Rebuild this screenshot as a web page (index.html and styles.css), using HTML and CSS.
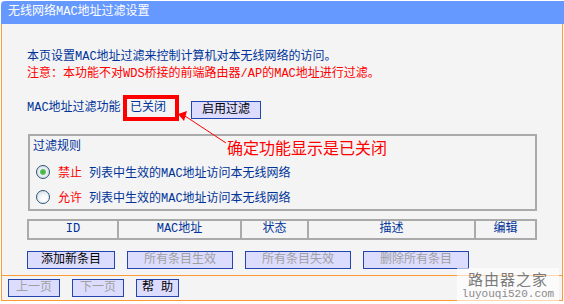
FILE: index.html
```html
<!DOCTYPE html>
<html lang="zh-CN">
<head>
<meta charset="UTF-8">
<title>无线网络MAC地址过滤设置</title>
<link rel="stylesheet" href="styles.css">
</head>
<body>

<div class="panel">
  <!-- TITLE -->
  <div class="title">无线网络MAC地址过滤设置</div>

  <!-- CONTENT -->
  <div class="content">
    <p class="info">本页设置MAC地址过滤来控制计算机对本无线网络的访问。</p>
    <p class="warn">注意：本功能不对WDS桥接的前端路由器/AP的MAC地址进行过滤。</p>

    <div class="status-row">
      <span class="label">MAC地址过滤功能</span>
      <span class="status">已关闭</span>
      <button class="btn enable">启用过滤</button>
    </div>

    <div class="rules">
      <div class="rules-title">过滤规则</div>
      <div class="rule"><span class="radio checked"></span><span class="mode">禁止</span>列表中生效的MAC地址访问本无线网络</div>
      <div class="rule"><span class="radio"></span><span class="mode">允许</span>列表中生效的MAC地址访问本无线网络</div>
    </div>

    <div class="table">
      <div>ID</div>
      <div>MAC地址</div>
      <div>状态</div>
      <div>描述</div>
      <div>编辑</div>
    </div>

    <div class="actions">
      <button class="btn add">添加新条目</button>
      <button class="btn wide" disabled>所有条目生效</button>
      <button class="btn wide" disabled>所有条目失效</button>
      <button class="btn wide" disabled>删除所有条目</button>
    </div>
  </div>

  <!-- FOOTER -->
  <div class="foot">
    <button class="btn page" disabled>上一页</button>
    <button class="btn page" disabled>下一页</button>
    <button class="btn help">帮 助</button>
  </div>

  <!-- ANNOTATION -->
  <svg class="arrow" width="60" height="40" viewBox="0 0 60 40">
    <line x1="15" y1="8" x2="56" y2="35" stroke="#f00" stroke-width="1"/>
    <polygon points="8,6 17,3 14,13" fill="#f00"/>
  </svg>
  <div class="note">确定功能显示是已关闭</div>

  <div class="watermark">
    <div class="wm-name">路由器之家</div>
    <div class="wm-url">luyouqi520.com</div>
  </div>
</div>

</body>
</html>
```

FILE: styles.css
```css
body {
  margin: 0;
  background: #fff;
  font-family: "Liberation Mono", "Noto Sans CJK SC", monospace;
  font-size: 12px;
}
.panel {
  position: relative;
  width: 562px;
  margin: 1px 0 0 1px;
}
.title {
  height: 23px;
  line-height: 23px;
  margin-right: -1px;
  padding-left: 7px;
  background: #6699ff;
  color: #fff;
  border-top-left-radius: 4px;
}
.content {
  background: #f4f4f4;
  border: 1px solid #ff9933;
  border-top: none;
  padding: 25px 0 6px 25px;
}
.info, .warn {
  margin: 0;
  line-height: 17px;
}
.info { color: #003399; }
.warn { color: #ff0000; }

.status-row {
  display: flex;
  align-items: flex-start;
  height: 26px;
  margin-top: 12px;
}
.label {
  width: 96px;
  line-height: 26px;
  color: #003399;
  white-space: nowrap;
}
.status {
  box-sizing: border-box;
  width: 56px;
  height: 26px;
  padding-left: 3px;
  border: 4px solid #ff0000;
  line-height: 18px;
  color: #003399;
}
.btn {
  box-sizing: border-box;
  height: 18px;
  padding: 0;
  border: 1px solid #2345b0;
  background: #dcdcff;
  color: #000;
  font: 12px "Liberation Mono", "Noto Sans CJK SC", monospace;
  line-height: 16px;
}
.btn:disabled { color: #a0a0a0; }
.enable {
  width: 70px;
  margin: 6px 0 0 12px;
}

.rules {
  box-sizing: border-box;
  width: 509px;
  margin: 13px 0 0 1px;
  padding: 3px 0 0 3px;
  border: 2px solid #aaaaaa;
}
.rules-title {
  line-height: 17px;
  margin-bottom: 3px;
  color: #003399;
}
.rule {
  display: flex;
  align-items: center;
  height: 25px;
  color: #003399;
}
.radio {
  box-sizing: border-box;
  width: 14px;
  height: 14px;
  margin: 0 8px 0 3px;
  border: 1px solid #2c5478;
  border-radius: 50%;
  background: radial-gradient(circle at 60% 65%, #ffffff 0, #f4f6f8 40%, #c9d2dc 100%);
}
.radio.checked {
  background: radial-gradient(circle, #3fae3f 0, #5cc05c 2.5px, #eef1f4 3.5px, #c9d2dc 100%);
}
.mode {
  margin-right: 7px;
  color: #ff0000;
}

.table {
  display: grid;
  grid-template-columns: 88px 121px 65px 165px 59px;
  gap: 2px;
  width: 510px;
  box-sizing: border-box;
  margin-top: 8px;
  border: 2px solid #aaaaaa;
  background: #aaaaaa;
}
.table div {
  background: #f4f4f4;
  line-height: 17px;
  text-align: center;
  color: #003399;
}

.actions {
  display: flex;
  gap: 12px;
  margin-top: 11px;
}
.add { width: 88px; }
.wide { width: 106px; }

.foot {
  display: flex;
  gap: 12px;
  padding: 3px 0 3px 6px;
  background: #f4f4f4;
  border: 1px solid #ff9933;
  border-top: none;
}
.page { width: 52px; }
.help { width: 43px; }

.arrow {
  position: absolute;
  left: 169px;
  top: 107px;
}
.note {
  position: absolute;
  left: 226px;
  top: 138px;
  font-family: "Noto Sans CJK SC", sans-serif;
  font-size: 16px;
  line-height: 16px;
  color: #ff0000;
}
.watermark {
  position: absolute;
  left: 456px;
  top: 267px;
  width: 102px;
  height: 33px;
  padding-top: 3px;
  box-sizing: border-box;
  background: rgba(255, 255, 255, 0.6);
  text-align: center;
}
.wm-name {
  font-family: "Noto Sans CJK SC", sans-serif;
  font-size: 15px;
  line-height: 15px;
  letter-spacing: 1px;
  color: #7a7a7a;
}
.wm-url {
  margin-top: 2px;
  font-size: 11px;
  line-height: 12px;
  color: #8a8a8a;
}
```
